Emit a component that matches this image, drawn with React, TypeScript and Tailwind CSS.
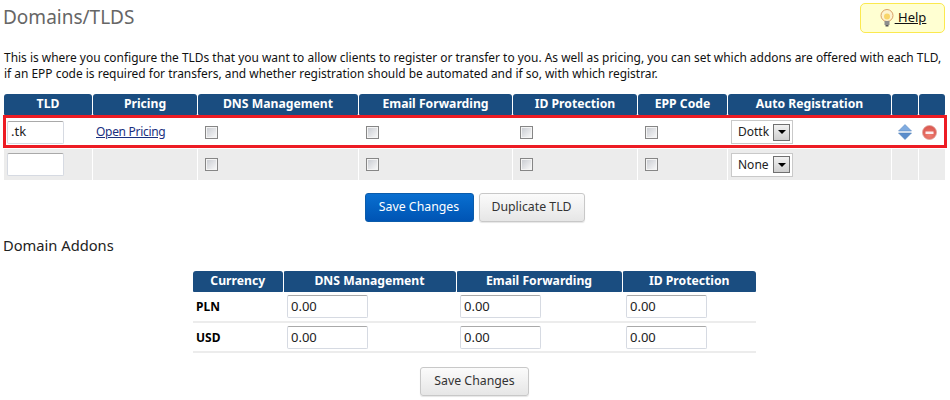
import { ReactNode } from 'react'

const FONT = "font-['Noto_Sans',sans-serif]"

const ROWS = [
    { tld: '.tk', pricing: 'Open Pricing', registrar: 'Dottk', icons: true, height: 'h-[32px]' },
    { tld: '', pricing: '', registrar: 'None', icons: false, height: 'h-[31px]' },
]

const ADDON_ROWS = ['PLN', 'USD']

const HeadCell = ({ children, className = '' }: { children?: ReactNode; className?: string }) => (
    <th className={`h-[21px] rounded-t-[3px] rounded-b-[1px] bg-[#1a4d80] p-0 text-center text-[12.2px] font-bold text-white ${className}`}>
        {children}
    </th>
)

const Check = () => (
    <span className="block h-[13px] w-[13px] border border-[#868686] bg-gradient-to-br from-[#c6c9cf] to-[#fbfbfb] shadow-[inset_0_0_0_1px_#f4f4f4]" />
)

const Select = ({ value }: { value: string }) => (
    <span className="flex h-[24px] w-[62px] items-center justify-between border border-[#c9c9c9] bg-white pl-[6px] pr-[2px] text-[12px] text-[#222]">
        {value}
        <span className="flex h-[17px] w-[17px] items-center justify-center border border-[#707070] bg-gradient-to-b from-[#f2f2f2] to-[#cfcfcf]">
            <span className="border-x-[4px] border-t-[4px] border-x-transparent border-t-black" />
        </span>
    </span>
)

const SortIcon = () => (
    <svg width="14" height="16" viewBox="0 0 14 16">
        <path d="M7 0.5 L13.5 7 H0.5 Z" fill="#7fabe0" stroke="#5f8cc4" strokeWidth="0.6" />
        <path d="M7 15.5 L13.5 9 H0.5 Z" fill="#5a8ccb" stroke="#4f7fb8" strokeWidth="0.6" />
    </svg>
)

const DeleteIcon = () => (
    <svg width="15" height="15" viewBox="0 0 15 15">
        <defs>
            <radialGradient id="del" cx="50%" cy="70%" r="60%">
                <stop offset="0%" stopColor="#ee7d70" />
                <stop offset="100%" stopColor="#dc5a52" />
            </radialGradient>
        </defs>
        <circle cx="7.5" cy="7.5" r="7" fill="url(#del)" stroke="#e0a79e" strokeWidth="0.8" />
        <rect x="3.5" y="6.5" width="8" height="2.5" fill="#fbeeee" />
    </svg>
)

const BulbIcon = () => (
    <svg width="16" height="18" viewBox="0 0 16 18">
        <circle cx="8" cy="6.5" r="6" fill="#fdf3cf" stroke="#d9a066" strokeWidth="1" />
        <circle cx="8" cy="7.5" r="3" fill="#f8d56a" />
        <rect x="5.5" y="12" width="5" height="4" fill="#8d8d8d" />
        <rect x="6.5" y="16" width="3" height="1.5" fill="#555" />
    </svg>
)

const TextBox = ({ value, width }: { value: string; width: string }) => (
    <span className={`flex h-[23px] items-center rounded-[2px] border border-[#d6dae2] border-t-[#a9a9a9] bg-white pl-[3px] text-[13px] text-[#222] ${width}`}>
        {value}
    </span>
)

const Button = ({ label, primary = false, width }: { label: string; primary?: boolean; width: string }) => (
    <button
        className={
            primary
                ? `h-[29px] rounded-[3px] border border-[#0b5cab] bg-gradient-to-b from-[#0a6fd0] to-[#0054b4] text-[12.3px] text-white ${width}`
                : `h-[29px] rounded-[3px] border border-[#c8c8c8] bg-gradient-to-b from-[#fbfbfb] to-[#e6e6e6] text-[12.3px] text-[#333] shadow-[0_1px_1px_rgba(0,0,0,0.1)] ${width}`
        }
    >
        {label}
    </button>
)

const App = () => {
    return (
        <div className={`relative h-[400px] w-[950px] overflow-hidden bg-white ${FONT}`}>
            <div className="flex items-start justify-between pl-[3px] pr-[5px] pt-[3px]">
                <h1 className="mt-[1px] text-[19px] leading-[26px] text-[#666]">Domains/TLDS</h1>
                <a className="flex h-[30px] w-[85px] items-center justify-center rounded-[5px] border border-[#fbe94f] bg-[#ffffd2] text-[13px] text-[#111]">
                    <BulbIcon />
                    <span className="underline">&nbsp;Help</span>
                </a>
            </div>

            <p className="mt-[17px] whitespace-pre pl-[4px] text-[11.95px] leading-[16px] text-[#111]">
                {'This is where you configure the TLDs that you want to allow clients to register or transfer to you. As well as pricing, you can set which addons are offered with each TLD,\nif an EPP code is required for transfers, and whether registration should be automated and if so, with which registrar.'}
            </p>

            <table className="mt-[11px] ml-[3px] table-fixed border-separate border-spacing-[1px] text-[12px]" style={{ width: 943 }}>
                <colgroup>
                    <col className="w-[88px]" />
                    <col className="w-[104px]" />
                    <col className="w-[160px]" />
                    <col className="w-[153px]" />
                    <col className="w-[124px]" />
                    <col className="w-[89px]" />
                    <col className="w-[163px]" />
                    <col className="w-[26px]" />
                    <col className="w-[26px]" />
                </colgroup>
                <thead>
                    <tr>
                        {['TLD', 'Pricing', 'DNS Management', 'Email Forwarding', 'ID Protection', 'EPP Code', 'Auto Registration', '', ''].map((h, i) => (
                            <HeadCell key={i}>{h}</HeadCell>
                        ))}
                    </tr>
                </thead>
                <tbody>
                    {ROWS.map((row, i) => {
                        const bg = i === 1 ? 'bg-[#ececec]' : 'bg-white'
                        return (
                            <tr key={i} className={row.height}>
                                <td className={`${bg} pl-[3px]`}><TextBox value={row.tld} width="w-[57px]" /></td>
                                <td className={`${bg} pl-[3px]`}>
                                    {row.pricing && <a className="text-[12px] tracking-[-0.3px] text-[#1a2f80] underline">{row.pricing}</a>}
                                </td>
                                {[0, 1, 2, 3].map((c) => (
                                    <td key={c} className={`${bg} pl-[7px]`}><Check /></td>
                                ))}
                                <td className={`${bg} pl-[3px]`}><Select value={row.registrar} /></td>
                                <td className={bg}>
                                    {row.icons && <span className="flex justify-center"><SortIcon /></span>}
                                </td>
                                <td className={`${bg} pr-[6px]`}>
                                    {row.icons && <span className="flex justify-center"><DeleteIcon /></span>}
                                </td>
                            </tr>
                        )
                    })}
                </tbody>
            </table>

            <div className="absolute left-[3px] top-[115px] h-[33px] w-[944px] border-[3px] border-[#ed1c24]" />

            <div className="mt-[12px] flex justify-center gap-[5px] pr-[1px]">
                <Button label="Save Changes" primary width="w-[109px]" />
                <Button label="Duplicate TLD" width="w-[106px]" />
            </div>

            <h2 className="mt-[13px] pl-[3px] text-[14.7px] leading-[20px] text-[#222]">Domain Addons</h2>

            <table className="ml-[193px] mt-[16px] table-fixed border-collapse text-[12px]" style={{ width: 563 }}>
                <colgroup>
                    <col className="w-[90px]" />
                    <col className="w-[173px]" />
                    <col className="w-[166px]" />
                    <col className="w-[134px]" />
                </colgroup>
                <thead>
                    <tr>
                        {['Currency', 'DNS Management', 'Email Forwarding', 'ID Protection'].map((h) => (
                            <HeadCell key={h} className="border-r border-white last:border-r-0">{h}</HeadCell>
                        ))}
                    </tr>
                </thead>
                <tbody>
                    {ADDON_ROWS.map((cur) => (
                        <tr key={cur} className="h-[30px] border-b-2 border-[#ececec]">
                            <td className="pl-[3px] pt-[5px] align-top font-bold leading-[20px] text-black">{cur}</td>
                            {[0, 1, 2].map((c) => (
                                <td key={c} className="pl-[4px] pt-[3px] align-top"><TextBox value="0.00" width="w-[81px]" /></td>
                            ))}
                        </tr>
                    ))}
                </tbody>
            </table>

            <div className="mt-[14px] flex justify-center pr-[1px]">
                <Button label="Save Changes" width="w-[109px]" />
            </div>
        </div>
    )
}

export default App
